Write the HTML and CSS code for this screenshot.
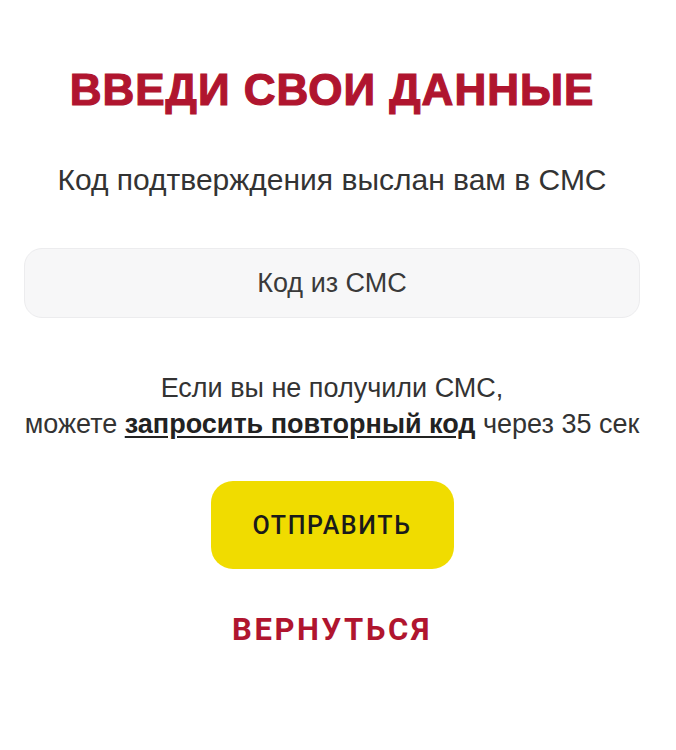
FILE: index.html
```html
<!DOCTYPE html>
<html lang="ru">
<head>
<meta charset="utf-8">
<title>Введи свои данные</title>
<link rel="stylesheet" href="styles.css">
</head>
<body>
<main class="page">
  <h1 class="title">ВВЕДИ СВОИ ДАННЫЕ</h1>
  <p class="subtitle">Код подтверждения выслан вам в СМС</p>
  <input class="code-input" type="text" placeholder="Код из СМС">
  <p class="resend">Если вы не получили СМС,<br>можете <a class="resend-link" href="#">запросить повторный код</a> через 35 сек</p>
  <button class="submit" type="button">ОТПРАВИТЬ</button>
  <a class="back" href="#">ВЕРНУТЬСЯ</a>
</main>
</body>
</html>
```

FILE: styles.css
```css
* { box-sizing: border-box; }
html, body { margin: 0; padding: 0; background: #ffffff; }
body { font-family: "Liberation Sans", Arial, sans-serif; color: #333333; }
.page {
  width: 676px;
  padding: 62px 36px 0 24px;
  display: flex;
  flex-direction: column;
  align-items: center;
}
.title {
  margin: 0;
  font-size: 44px;
  font-weight: 900;
  color: #b0152f;
  letter-spacing: 1px;
  line-height: 56px;
  -webkit-text-stroke: 1.2px #b0152f;
}
.subtitle {
  margin: 44px 0 0;
  font-size: 30px;
  line-height: 36px;
  color: #333333;
}
.code-input {
  margin-top: 50px;
  width: 616px;
  height: 70px;
  border: 1px solid #ececee;
  border-radius: 18px;
  background: #f7f7f8;
  font-family: "Liberation Sans", Arial, sans-serif;
  font-size: 27px;
  text-align: center;
  color: #333333;
  outline: none;
}
.code-input::placeholder { color: #3a3a3a; }
.resend {
  margin: 52px 0 0;
  font-size: 27px;
  line-height: 36px;
  text-align: center;
  color: #333333;
}
.resend-link {
  color: #222222;
  font-weight: bold;
  text-decoration: underline;
  text-underline-offset: 3px;
}
.submit {
  margin-top: 39px;
  width: 243px;
  height: 88px;
  border: none;
  border-radius: 22px;
  background: #f0dc00;
  font-family: Roboto, "Liberation Sans", sans-serif;
  font-size: 25px;
  font-weight: 500;
  letter-spacing: 1.6px;
  color: #1a1a1a;
}
.back {
  margin-top: 42px;
  font-family: Roboto, "Liberation Sans", sans-serif;
  font-size: 31px;
  font-weight: 700;
  letter-spacing: 2.6px;
  color: #b0152f;
  text-decoration: none;
}
```
